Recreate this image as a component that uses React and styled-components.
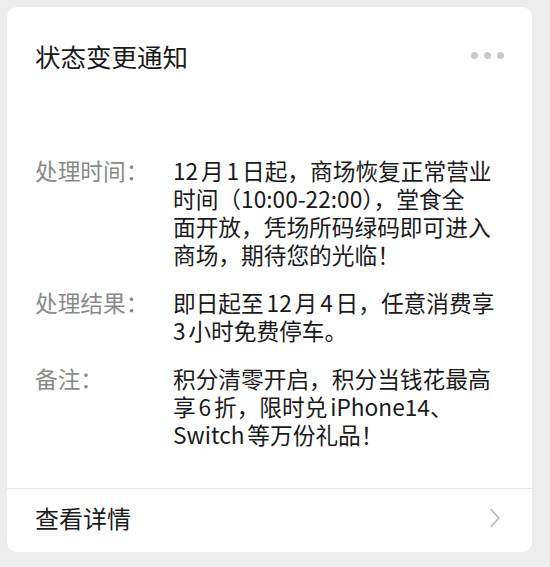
import styled, { createGlobalStyle } from 'styled-components';

const GlobalStyle = createGlobalStyle`
  html, body {
    margin: 0;
    padding: 0;
    background: #ededed;
  }
  body {
    font-family: "Noto Sans CJK SC", "Noto Sans", sans-serif;
    -webkit-font-smoothing: antialiased;
  }
`;

const rows = [
  {
    label: '处理时间：',
    lines: [
      '12月1日起，商场恢复正常营业',
      '时间（10:00-22:00），堂食全',
      '面开放，凭场所码绿码即可进入',
      '商场，期待您的光临！',
    ],
  },
  {
    label: '处理结果：',
    lines: ['即日起至12月4日，任意消费享', '3小时免费停车。'],
  },
  {
    label: '备注：',
    lines: ['积分清零开启，积分当钱花最高', '享6折，限时兑iPhone14、', 'Switch等万份礼品！'],
  },
];

export default function App() {
  return (
    <>
      <GlobalStyle />
      <Page>
        <Card>
          <Header>
            <Title>状态变更通知</Title>
            <MoreDots>
              <span />
              <span />
              <span />
            </MoreDots>
          </Header>
          <InfoList>
            {rows.map((row) => (
              <InfoRow key={row.label}>
                <Label>{row.label}</Label>
                <Value>{row.lines.join('\n')}</Value>
              </InfoRow>
            ))}
          </InfoList>
          <Footer>
            <FooterText>查看详情</FooterText>
            <svg width="12" height="20" viewBox="0 0 12 20">
              <path d="M2 1.5 L10 10 L2 18.5" fill="none" stroke="#b8b8b8" strokeWidth="1.7" strokeLinecap="round" strokeLinejoin="round" />
            </svg>
          </Footer>
        </Card>
      </Page>
    </>
  );
}

const Page = styled.div`
  padding: 7px 18px 14px 7px;
`;

const Card = styled.div`
  background: #ffffff;
  border-radius: 10px;
  overflow: hidden;
`;

const Header = styled.div`
  display: flex;
  align-items: center;
  justify-content: space-between;
  padding: 32px 28px 0 28px;
`;

const Title = styled.div`
  font-size: 25.5px;
  line-height: 34px;
  color: #191919;
`;

const MoreDots = styled.div`
  display: flex;
  gap: 6px;
  margin-top: -2px;
  span {
    width: 7px;
    height: 7px;
    border-radius: 50%;
    background: #c9c9c9;
  }
`;

const InfoList = styled.div`
  display: flex;
  flex-direction: column;
  gap: 20px;
  padding: 84px 0 39px 28px;
`;

const InfoRow = styled.div`
  display: grid;
  grid-template-columns: 138px 1fr;
  font-size: 22.7px;
  line-height: 28px;
  text-autospace: normal;
`;

const Label = styled.div`
  color: #8a8a8a;
`;

const Value = styled.div`
  white-space: pre;
  color: #1a1a1a;
`;

const Footer = styled.div`
  display: flex;
  align-items: center;
  justify-content: space-between;
  height: 64px;
  padding: 0 31px 6px 28px;
  box-sizing: border-box;
  border-top: 1px solid #e6e6e6;
`;

const FooterText = styled.div`
  font-size: 24px;
  color: #1a1a1a;
`;
